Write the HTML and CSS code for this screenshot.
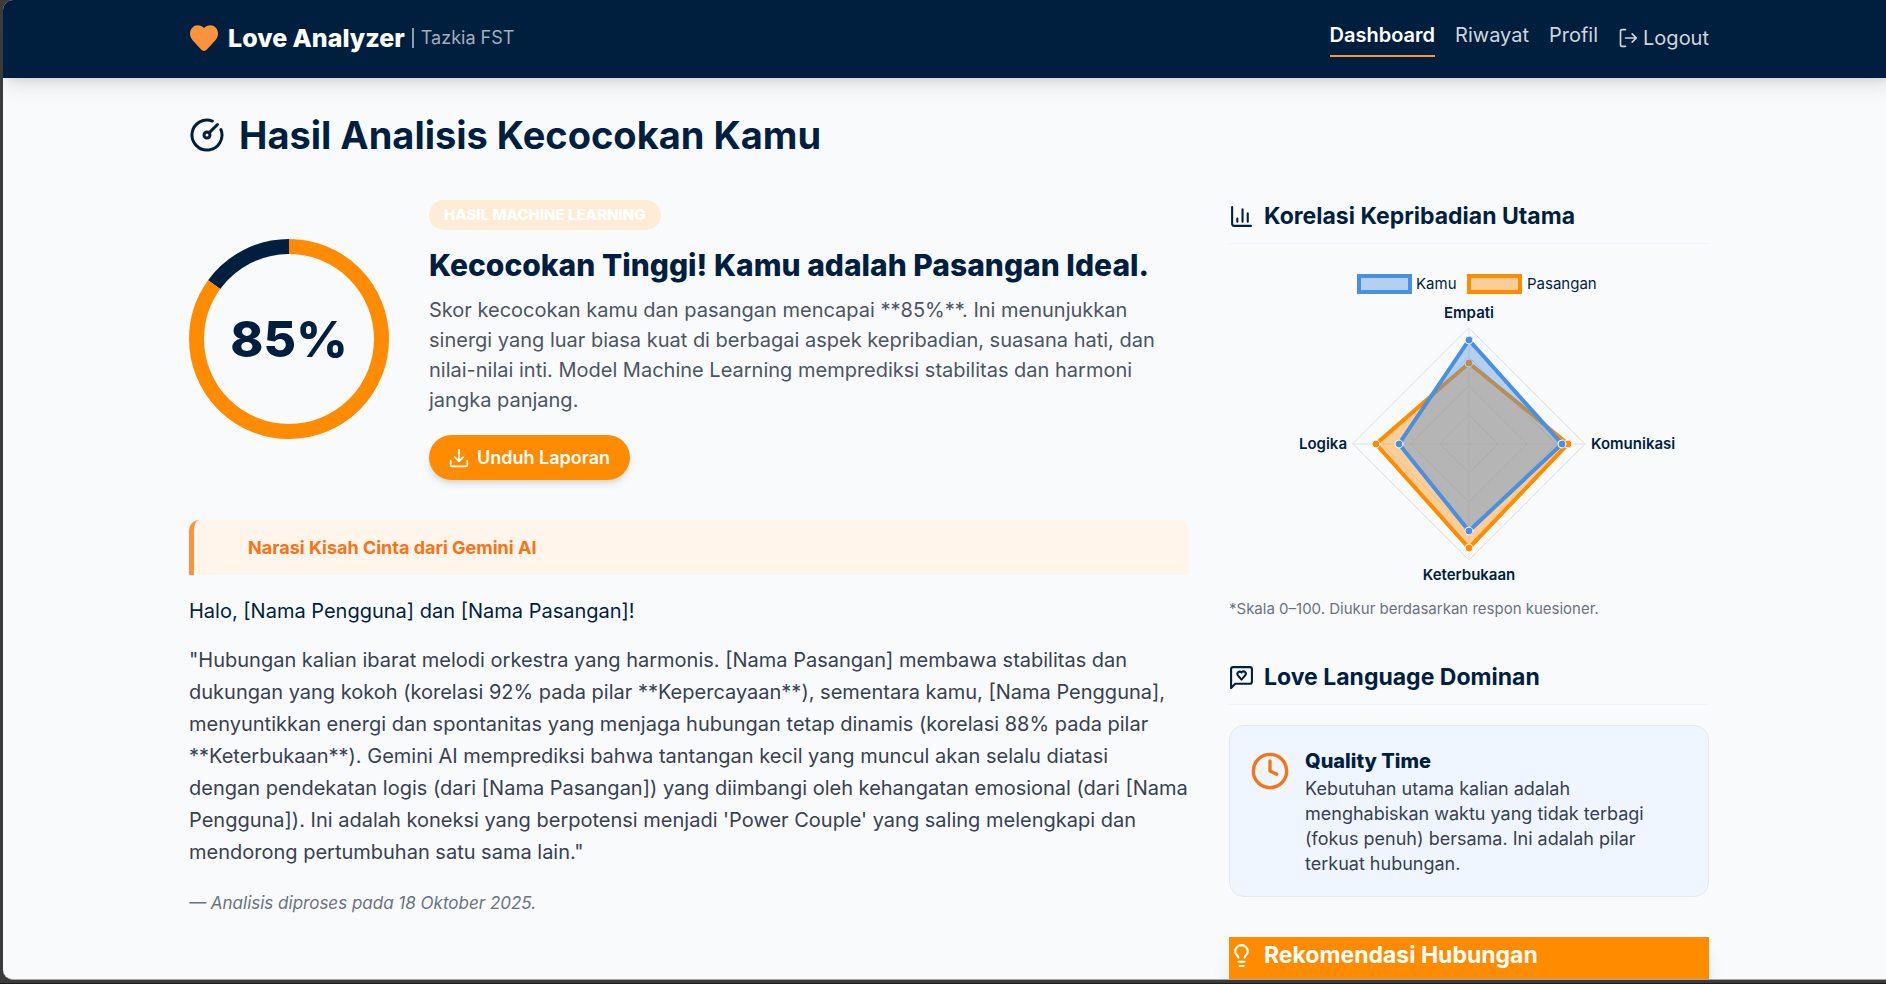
FILE: index.html
```html
<!DOCTYPE html>
<html lang="id">
<head>
<meta charset="utf-8">
<meta name="viewport" content="width=device-width, initial-scale=1">
<title>Love Analyzer</title>
<link rel="stylesheet" href="styles.css">
</head>
<body>
<div class="page">
  <header class="site-header">
    <div class="container header-row">
      <a class="brand" href="#">
        <svg class="brand-heart" viewBox="0 0 28 26" aria-hidden="true"><path d="M14 26C12.6 26 11 24.200 9 22.200L2.600 15.200C-1 11.200-.7 5.600 2.300 2.700 5.600-.6 10.600-.3 14 3 17.400-.3 22.400-.6 25.700 2.700 28.700 5.600 29 11.200 25.400 15.200L19 22.200C17 24.200 15.400 26 14 26Z"/></svg>
        <span class="brand-name">Love Analyzer</span>
        <span class="brand-sub">Tazkia FST</span>
      </a>
      <nav class="nav">
        <a class="nav-link active" href="#">Dashboard</a>
        <a class="nav-link" href="#">Riwayat</a>
        <a class="nav-link" href="#">Profil</a>
        <a class="nav-link logout" href="#"><svg class="icon-nav" viewBox="0 0 24 24" aria-hidden="true"><path d="M9 2H5a2 2 0 0 0-2 2v16a2 2 0 0 0 2 2h4M9 12h13M17 7l5 5-5 5"/></svg>Logout</a>
      </nav>
    </div>
  </header>

  <main class="container main">
    <h1 class="page-title">
      <svg class="icon-title" viewBox="0 0 24 24" aria-hidden="true"><path d="M15.600 2.700a10 10 0 1 0 5.700 5.700M13.400 10.600 19 5"/><circle cx="12" cy="12" r="2"/></svg>
      Hasil Analisis Kecocokan Kamu
    </h1>

    <div class="columns">
      <div class="col-main">
        <section class="score">
          <div class="gauge">
            <svg class="gauge-ring" viewBox="0 0 200 200" aria-hidden="true">
              <circle class="ring-rest" cx="100" cy="100" r="92.500" pathLength="100"/>
              <circle class="ring-value" cx="100" cy="100" r="92.500" pathLength="100"/>
            </svg>
            <span class="gauge-text">85%</span>
          </div>
          <div class="score-body">
            <span class="badge">HASIL MACHINE LEARNING</span>
            <h2 class="score-title">Kecocokan Tinggi! Kamu adalah Pasangan Ideal.</h2>
            <p class="score-text">Skor kecocokan kamu dan pasangan mencapai **85%**. Ini menunjukkan sinergi yang luar biasa kuat di berbagai aspek kepribadian, suasana hati, dan nilai-nilai inti. Model Machine Learning memprediksi stabilitas dan harmoni jangka panjang.</p>
            <button class="download" type="button"><svg class="icon-btn" viewBox="0 0 24 24" aria-hidden="true"><path d="M12 2v14M7 11l5 5 5-5M2 15v5a2 2 0 0 0 2 2h16a2 2 0 0 0 2-2v-5"/></svg>Unduh Laporan</button>
          </div>
        </section>

        <section class="story">
          <h3 class="story-banner">Narasi Kisah Cinta dari Gemini AI</h3>
          <p class="story-greeting">Halo, [Nama Pengguna] dan [Nama Pasangan]!</p>
          <p class="story-text">"Hubungan kalian ibarat melodi orkestra yang harmonis. [Nama Pasangan] membawa stabilitas dan dukungan yang kokoh (korelasi 92% pada pilar **Kepercayaan**), sementara kamu, [Nama Pengguna], menyuntikkan energi dan spontanitas yang menjaga hubungan tetap dinamis (korelasi 88% pada pilar **Keterbukaan**). Gemini AI memprediksi bahwa tantangan kecil yang muncul akan selalu diatasi<br>dengan pendekatan logis (dari [Nama Pasangan]) yang diimbangi oleh kehangatan emosional (dari [Nama Pengguna]). Ini adalah koneksi yang berpotensi menjadi 'Power Couple' yang saling melengkapi dan mendorong pertumbuhan satu sama lain."</p>
          <p class="story-date">— Analisis diproses pada 18 Oktober 2025.</p>
        </section>
      </div>

      <aside class="col-side">
        <section class="correlation">
          <h3 class="side-title"><svg class="icon-side" viewBox="0 0 24 24" aria-hidden="true"><path d="M3 3v16a2 2 0 0 0 2 2h16M8 17v-3M13 17V5M18 17V9"/></svg>Korelasi Kepribadian Utama</h3>
          <svg class="radar" viewBox="0 0 480 330" role="img" aria-label="Korelasi kepribadian">
            <g class="legend">
              <rect class="s-you" x="130" y="12" width="51" height="16"/>
              <text x="187" y="25">Kamu</text>
              <rect class="s-mate" x="240" y="12" width="51" height="16"/>
              <text x="298" y="25">Pasangan</text>
            </g>
            <g class="grid">
              <path d="M240 151l29 29-29 29-29-29zM240 122l58 58-58 58-58-58zM240 93l87 87-87 87-87-87zM240 64l116 116-116 116-116-116zM240 64v232M124 180h232"/>
            </g>
            <g class="axis">
              <text x="240" y="54" text-anchor="middle">Empati</text>
              <text x="362" y="185">Komunikasi</text>
              <text x="240" y="316" text-anchor="middle">Keterbukaan</text>
              <text x="118" y="185" text-anchor="end">Logika</text>
            </g>
            <path class="s-mate" d="M240 99L339 180L240 284L147 180Z"/>
            <g class="p-mate"><circle cx="240" cy="99" r="4"/><circle cx="339" cy="180" r="4"/><circle cx="240" cy="284" r="4"/><circle cx="147" cy="180" r="4"/></g>
            <path class="s-you" d="M240 76L333 180L240 267L170 180Z"/>
            <g class="p-you"><circle cx="240" cy="76" r="4"/><circle cx="333" cy="180" r="4"/><circle cx="240" cy="267" r="4"/><circle cx="170" cy="180" r="4"/></g>
          </svg>
          <p class="note">*Skala 0–100. Diukur berdasarkan respon kuesioner.</p>
        </section>

        <section>
          <h3 class="side-title"><svg class="icon-side" viewBox="0 0 24 24" aria-hidden="true"><path d="M22 16a2 2 0 0 1-2 2H6l-4 4V4a2 2 0 0 1 2-2h16a2 2 0 0 1 2 2z"/><path d="M15.500 6.800a2.300 2.300 0 0 0-3.200 0l-.3.300-.3-.3a2.300 2.300 0 0 0-3.200 3.200l3.500 4 3.500-4a2.300 2.300 0 0 0 0-3.200"/></svg>Love Language Dominan</h3>
          <div class="love-card">
            <svg class="icon-clock" viewBox="0 0 24 24" aria-hidden="true"><circle cx="12" cy="12" r="10"/><path d="M12 6v6l4 2"/></svg>
            <div>
              <h4 class="love-title">Quality Time</h4>
              <p class="love-text">Kebutuhan utama kalian adalah menghabiskan waktu yang tidak terbagi (fokus penuh) bersama. Ini adalah pilar terkuat hubungan.</p>
            </div>
          </div>
        </section>

        <section class="advice">
          <h3 class="side-title advice-title"><svg class="icon-side" viewBox="0 0 24 24" aria-hidden="true"><path d="M15 14c.2-1 .7-1.700 1.500-2.500 1-.9 1.500-2.200 1.500-3.500A6 6 0 0 0 6 8c0 1 .2 2.200 1.500 3.500.7.700 1.300 1.500 1.500 2.500M9 18h6M10 22h4"/></svg>Rekomendasi Hubungan</h3>
        </section>
      </aside>
    </div>
  </main>
</div>
</body>
</html>
```
FILE: styles.css
```css
*, *::before, *::after { box-sizing: border-box; }

html { background: #3b3b3b; }

body {
  margin: 0;
  height: 100vh;
  padding: 0 0 3px 3px;
  overflow: hidden;
  border-bottom: 1px solid #1c1c1c;
  font-family: Inter, "Liberation Sans", sans-serif;
  font-size: 20px;
  line-height: 30px;
  color: #001f3f;
}

h1, h2, h3, h4, p { margin: 0; }

svg { fill: none; stroke: currentColor; stroke-width: 2; stroke-linecap: round; stroke-linejoin: round; flex: none; }

.page {
  height: 100%;
  margin-right: -9px;
  overflow: hidden;
  border-radius: 10px;
  border-bottom: 1px solid #a8a8a8;
  background: #f9fafc;
}

.container {
  max-width: 1600px;
  margin: 0 auto;
  padding-left: 40px;
  padding-right: 40px;
}

.site-header {
  background: #001f3f;
  box-shadow: 0 12px 20px -4px rgba(0, 0, 0, 0.1), 0 5px 8px -4px rgba(0, 0, 0, 0.1);
}

.header-row {
  display: flex;
  align-items: center;
  justify-content: space-between;
  height: 78px;
  padding-bottom: 2px;
}

.brand { display: flex; align-items: center; color: #fff; text-decoration: none; }
.brand-heart { width: 28px; height: 26px; margin: 0 10px 0 1px; fill: #fb923c; stroke: none; }
.brand-name { font-size: 25px; font-weight: 800; }
.brand-sub { margin-left: 7px; padding-left: 7px; border-left: 2px solid #8f9bab; color: #a3aebb; font-size: 18px; line-height: 20px; }

.nav { display: flex; align-items: center; gap: 20px; }
.nav-link { padding-bottom: 5px; border-bottom: 2px solid transparent; color: #d1d5db; text-decoration: none; }
.nav-link.active { border-color: #fb923c; color: #fff; font-weight: 600; }
.nav-link.logout { display: flex; align-items: center; gap: 5px; padding: 0; border: 0; }
.icon-nav { width: 20px; height: 20px; }

.main { padding-top: 32px; }

.page-title { display: flex; align-items: center; gap: 14px; margin-bottom: 40px; font-size: 38px; line-height: 50px; font-weight: 700; }
.icon-title { width: 36px; height: 36px; }

.columns { display: grid; grid-template-columns: repeat(3, minmax(0, 1fr)); gap: 40px; }
.col-main { grid-column: span 2; display: flex; flex-direction: column; gap: 40px; }
.col-side { display: flex; flex-direction: column; gap: 40px; }

.score { display: flex; align-items: center; gap: 40px; }
.gauge { display: grid; place-items: center; flex: none; width: 200px; padding-bottom: 2px; }
.gauge > * { grid-area: 1 / 1; }
.gauge-ring { width: 200px; height: 200px; stroke-width: 15; stroke-linecap: butt; transform: rotate(-90deg); }
.ring-rest { stroke: #001f3f; stroke-dasharray: 15 85; stroke-dashoffset: 15; }
.ring-value { stroke: #ff8c00; stroke-dasharray: 85 15; }
.gauge-text { font-size: 50px; line-height: 50px; font-weight: 800; }

.badge { display: block; width: fit-content; padding: 5px 15px; margin-bottom: 15px; border-radius: 15px; background: #ffecd6; color: #fff; font-size: 15px; line-height: 20px; font-weight: 800; }
.score-title { margin-bottom: 10px; font-size: 30px; line-height: 40px; font-weight: 800; }
.score-text { margin-bottom: 20px; color: #4b5563; }
.download { display: flex; align-items: center; gap: 8px; height: 45px; padding: 0 20px; border: 0; border-radius: 23px; background: #ff8c00; color: #fff; box-shadow: 0 5px 8px -1px rgba(0, 0, 0, 0.1), 0 3px 5px -2px rgba(0, 0, 0, 0.1); font-family: inherit; font-size: 18px; font-weight: 600; }
.icon-btn { width: 20px; height: 20px; }

.story-banner { padding: 15px 20px 15px 54px; border-left: 5px solid #fb923c; border-radius: 10px 10px 0 0; background: #fff5eb; color: #f97316; font-size: 18px; line-height: 25px; font-weight: 700; }
.story-greeting { margin-top: 20px; line-height: 32px; }
.story-text { margin-top: 17px; line-height: 32px; color: #374151; }
.story-date { margin-top: 20px; color: #6b7280; font-size: 17px; line-height: 30px; font-style: italic; }

.side-title { display: flex; align-items: center; gap: 10px; margin-bottom: 20px; padding-bottom: 10px; border-bottom: 1px solid #eef2ff; font-size: 23px; line-height: 33px; font-weight: 700; }
.icon-side { width: 25px; height: 25px; }

.correlation { padding-bottom: 2px; }
.radar { display: block; width: 100%; height: auto; }
.radar text { fill: #001f3f; stroke: none; font-size: 15px; }
.radar .axis text { font-weight: 600; }
.grid { stroke: #dfe1e5; stroke-width: 1; }
.s-you, .s-mate { stroke-width: 4; stroke-linejoin: miter; }
.s-you { fill: rgba(74, 144, 226, 0.4); stroke: #4a90e2; }
.s-mate { fill: rgba(255, 140, 0, 0.4); stroke: #ff8c00; }
.p-you, .p-mate { stroke: #fff; stroke-width: 1; }
.p-you { fill: #4a90e2; }
.p-mate { fill: #ff8c00; }
.note { margin-top: 5px; color: #6b7280; font-size: 15px; line-height: 20px; }

.love-card { display: flex; align-items: flex-start; gap: 15px; padding: 20px; border: 1px solid #e5e7eb; border-radius: 15px; background: #eff6ff; }
.icon-clock { width: 40px; height: 40px; margin-top: 5px; color: #f97316; }
.love-title { font-size: 20px; line-height: 30px; font-weight: 800; }
.love-text { color: #374151; font-size: 18px; line-height: 25px; }

.advice { height: 200px; padding-top: 2px; background: #ff8c00; box-shadow: 0 12px 20px -4px rgba(0, 0, 0, 0.1); }
.advice-title { border: 0; color: #fff; }
```
